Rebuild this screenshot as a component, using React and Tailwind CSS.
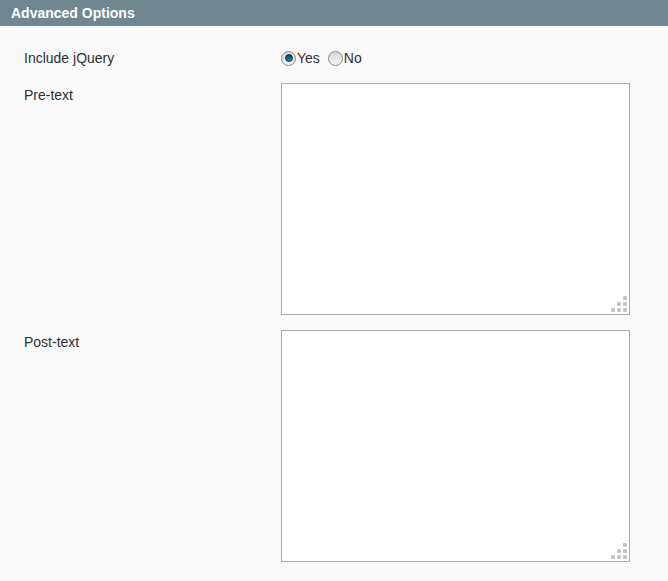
import React from 'react';

const Grip = () => (
    <svg className="absolute right-[2px] bottom-[2px] pointer-events-none" width="17" height="17" viewBox="0 0 17 17">
        {[[12, 0], [6, 6], [12, 6], [0, 12], [6, 12], [12, 12]].map(([x, y], i) => (
            <rect key={i} x={x} y={y} width="4" height="4" rx="1" fill="#c4c4c4" />
        ))}
    </svg>
);

const Radio = ({ checked }) => (
    <span className="inline-block w-[15px] h-[15px] rounded-full border border-[#8a8a8a] bg-gradient-to-b from-[#d6d6d6] to-[#f4f4f4] relative shrink-0">
        {checked && (
            <span className="absolute left-[2.5px] top-[2.5px] w-[8px] h-[8px] rounded-full bg-gradient-to-b from-[#0c3c5c] to-[#2a8ac4] border border-[#08304a]" />
        )}
    </span>
);

const Field = ({ label }) => (
    <div className="flex">
        <div className="w-[257px] pt-[4px] leading-[16px]">{label}</div>
        <div className="relative">
            <textarea className="block w-[349px] h-[232px] bg-white border border-[#ababab] resize-none outline-none" />
            <Grip />
        </div>
    </div>
);

export default function App() {
    return (
        <div className="w-[668px] h-[581px] bg-[#f9f9f9] text-[14px] text-[#2f2f2f] overflow-hidden" style={{ fontFamily: '"Liberation Sans", Arial, sans-serif' }}>
            {/* Section header */}
            <div className="h-[26px] bg-[#6f8790] text-white font-bold pl-[11px] leading-[26px]">Advanced Options</div>

            <div className="pl-[24px] pt-[22px] flex flex-col gap-[15px]">
                <div className="flex items-center h-[20px]">
                    <div className="w-[257px]">Include jQuery</div>
                    <label className="flex items-center">
                        <Radio checked />
                        <span className="ml-[1px]">Yes</span>
                    </label>
                    <label className="flex items-center ml-[8px]">
                        <Radio />
                        <span className="ml-[1px]">No</span>
                    </label>
                </div>
                <Field label="Pre-text" />
                <Field label="Post-text" />
            </div>
        </div>
    );
}
